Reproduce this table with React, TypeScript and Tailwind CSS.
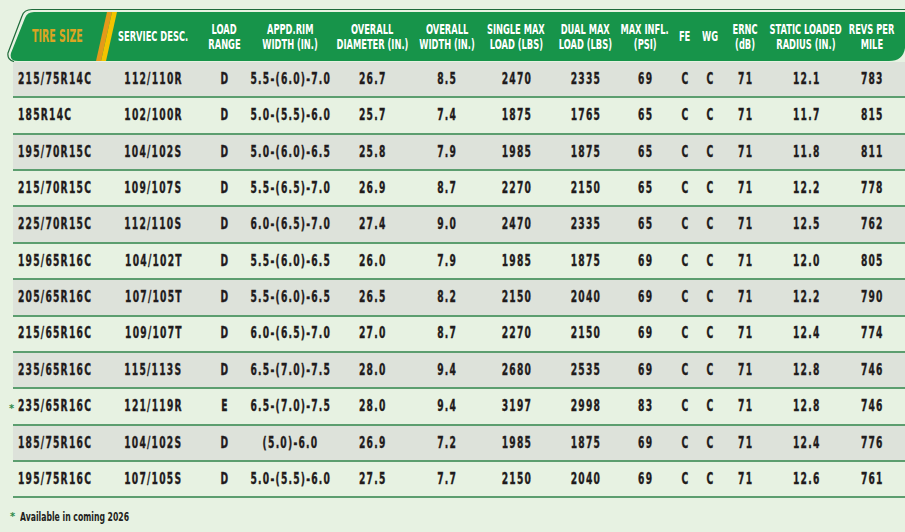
import React from 'react';

const font = "font-['DejaVu_Sans_Condensed','DejaVu_Sans',sans-serif]";
const cols = 'grid grid-cols-[99px_82px_60px_72px_92px_58px_80px_58px_62px_18px_32px_38px_84px_48px_1fr]';

const headers: string[][] = [
  ['TIRE SIZE'],
  ['SERVIEC DESC.'],
  ['LOAD', 'RANGE'],
  ['APPD.RIM', 'WIDTH (IN.)'],
  ['OVERALL', 'DIAMETER (IN.)'],
  ['OVERALL', 'WIDTH (IN.)'],
  ['SINGLE MAX', 'LOAD (LBS)'],
  ['DUAL MAX', 'LOAD (LBS)'],
  ['MAX INFL.', '(PSI)'],
  ['FE'],
  ['WG'],
  ['ERNC', '(dB)'],
  ['STATIC LOADED', 'RADIUS (IN.)'],
  ['REVS PER', 'MILE'],
];

const rows: { cells: string[]; star?: boolean }[] = [
  { cells: ['215/75R14C', '112/110R', 'D', '5.5-(6.0)-7.0', '26.7', '8.5', '2470', '2335', '69', 'C', 'C', '71', '12.1', '783'] },
  { cells: ['185R14C', '102/100R', 'D', '5.0-(5.5)-6.0', '25.7', '7.4', '1875', '1765', '65', 'C', 'C', '71', '11.7', '815'] },
  { cells: ['195/70R15C', '104/102S', 'D', '5.0-(6.0)-6.5', '25.8', '7.9', '1985', '1875', '65', 'C', 'C', '71', '11.8', '811'] },
  { cells: ['215/70R15C', '109/107S', 'D', '5.5-(6.5)-7.0', '26.9', '8.7', '2270', '2150', '65', 'C', 'C', '71', '12.2', '778'] },
  { cells: ['225/70R15C', '112/110S', 'D', '6.0-(6.5)-7.0', '27.4', '9.0', '2470', '2335', '65', 'C', 'C', '71', '12.5', '762'] },
  { cells: ['195/65R16C', '104/102T', 'D', '5.5-(6.0)-6.5', '26.0', '7.9', '1985', '1875', '69', 'C', 'C', '71', '12.0', '805'] },
  { cells: ['205/65R16C', '107/105T', 'D', '5.5-(6.0)-6.5', '26.5', '8.2', '2150', '2040', '69', 'C', 'C', '71', '12.2', '790'] },
  { cells: ['215/65R16C', '109/107T', 'D', '6.0-(6.5)-7.0', '27.0', '8.7', '2270', '2150', '69', 'C', 'C', '71', '12.4', '774'] },
  { cells: ['235/65R16C', '115/113S', 'D', '6.5-(7.0)-7.5', '28.0', '9.4', '2680', '2535', '69', 'C', 'C', '71', '12.8', '746'] },
  { cells: ['235/65R16C', '121/119R', 'E', '6.5-(7.0)-7.5', '28.0', '9.4', '3197', '2998', '83', 'C', 'C', '71', '12.8', '746'], star: true },
  { cells: ['185/75R16C', '104/102S', 'D', '(5.0)-6.0', '26.9', '7.2', '1985', '1875', '69', 'C', 'C', '71', '12.4', '776'] },
  { cells: ['195/75R16C', '107/105S', 'D', '5.0-(5.5)-6.0', '27.5', '7.7', '2150', '2040', '69', 'C', 'C', '71', '12.6', '761'] },
];

const HeaderShape: React.FC = () => (
  <svg className="absolute inset-0" width="905" height="54" viewBox="0 0 905 54">
    <path
      d="M 34 4 L 905 4 L 905 40 Q 903 53 889 53 L 18 53 Q 9 53 11 45 L 25 10 Q 27 4 34 4 Z"
      fill="#17944a"
    />
    <path
      d="M 905 1.5 L 32 1.5 Q 24 1.5 22 8 L 8 45 Q 7 52 14 53.5"
      fill="none"
      stroke="#1f6b3b"
      strokeWidth="1.2"
    />
    <polygon points="107,4 112,4 101,53 96,53" fill="#e39a1a" />
    <polygon points="112,4 117,4 106,53 101,53" fill="#f3c300" />
  </svg>
);

const App: React.FC = () => {
  return (
    <div className={`w-[905px] h-[532px] bg-[#e7f2e2] pt-2 overflow-hidden ${font}`}>
      <div className="relative h-[54px]">
        <HeaderShape />
        <div className={`relative ${cols} h-full pl-[13px] pt-[4px] pb-[1px] text-white text-[14px] leading-[15px] font-bold`}>
          {headers.map((h, i) =>
            i === 0 ? (
              <div key={i} className="flex items-center pl-[19px] whitespace-nowrap">
                <span className="inline-block origin-left scale-x-[0.62] text-[17px] text-[#dca521]">{h[0]}</span>
              </div>
            ) : (
              <div key={i} className="flex flex-col items-center justify-center whitespace-nowrap">
                {h.map((line, j) => (
                  <span key={j} className="inline-block scale-x-[0.66]">
                    {line}
                  </span>
                ))}
              </div>
            )
          )}
        </div>
      </div>

      <div className="ml-[13px]">
        {rows.map((row, r) => (
          <div
            key={r}
            className={`${cols} h-[36.36px] border-b-2 border-[#5c9e6f] text-[15px] font-bold tracking-[1.8px] text-[#1f1b1c] [-webkit-text-stroke:0.35px_#1f1b1c] ${r % 2 === 0 ? 'bg-[#dde2da]' : ''}`}
          >
            {row.cells.map((c, i) => (
              <div
                key={i}
                className={`relative flex items-center whitespace-nowrap ${i === 0 ? 'justify-start pl-[5px]' : 'justify-center'}`}
              >
                {i === 0 && row.star && (
                  <span className="absolute left-[-4px] top-[14px] text-[11px] leading-none tracking-normal text-[#2c8a4a] [-webkit-text-stroke:0px]">*</span>
                )}
                <span className={`inline-block scale-x-[0.68] ${i === 0 ? 'origin-left' : 'pl-[1.8px]'}`}>{c}</span>
              </div>
            ))}
            <div />
          </div>
        ))}
      </div>

      <div className="flex items-center pl-[10px] pt-[9px] text-[13px] font-bold text-[#231f20]">
        <span className="text-[#2c8a4a] text-[11px] mr-[5px]">*</span>
        <span className="inline-block origin-left scale-x-[0.66] whitespace-nowrap">Available in coming 2026</span>
      </div>
    </div>
  );
};

export default App;
